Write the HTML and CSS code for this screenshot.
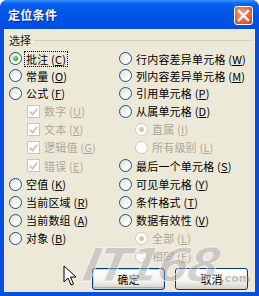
FILE: index.html
```html
<!DOCTYPE html>
<html>
<head>
<meta charset="utf-8">
<link rel="stylesheet" href="styles.css">
</head>
<body>
<div class="window">
  <div class="titlebar">
    <span class="title">定位条件</span>
    <span class="close"><svg width="13" height="13" viewBox="0 0 13 13"><path d="M2 2 L11 11 M11 2 L2 11" stroke="#fff" stroke-width="2.4" stroke-linecap="square"/></svg></span>
  </div>
  <div class="body">
    <div class="group">
      <div class="legend"><span>选择</span><i class="line"></i></div>
      <div class="grid">
        <div class="opt l"><i class="radio on"></i><span class="focus">批注 (<u>C</u>)</span></div>
        <div class="opt r"><i class="radio"></i><span>行内容差异单元格 (<u>W</u>)</span></div>
        <div class="opt l"><i class="radio"></i><span>常量 (<u>O</u>)</span></div>
        <div class="opt r"><i class="radio"></i><span>列内容差异单元格 (<u>M</u>)</span></div>
        <div class="opt l"><i class="radio"></i><span>公式 (<u>F</u>)</span></div>
        <div class="opt r"><i class="radio"></i><span>引用单元格 (<u>P</u>)</span></div>
        <div class="opt l sub dis"><i class="check"></i><span>数字 (<u>U</u>)</span></div>
        <div class="opt r"><i class="radio"></i><span>从属单元格 (<u>D</u>)</span></div>
        <div class="opt l sub dis"><i class="check"></i><span>文本 (<u>X</u>)</span></div>
        <div class="opt r sub dis"><i class="radio on"></i><span>直属 (<u>I</u>)</span></div>
        <div class="opt l sub dis"><i class="check"></i><span>逻辑值 (<u>G</u>)</span></div>
        <div class="opt r sub dis"><i class="radio"></i><span>所有级别 (<u>L</u>)</span></div>
        <div class="opt l sub dis"><i class="check"></i><span>错误 (<u>E</u>)</span></div>
        <div class="opt r"><i class="radio"></i><span>最后一个单元格 (<u>S</u>)</span></div>
        <div class="opt l"><i class="radio"></i><span>空值 (<u>K</u>)</span></div>
        <div class="opt r"><i class="radio"></i><span>可见单元格 (<u>Y</u>)</span></div>
        <div class="opt l"><i class="radio"></i><span>当前区域 (<u>R</u>)</span></div>
        <div class="opt r"><i class="radio"></i><span>条件格式 (<u>T</u>)</span></div>
        <div class="opt l"><i class="radio"></i><span>当前数组 (<u>A</u>)</span></div>
        <div class="opt r"><i class="radio"></i><span>数据有效性 (<u>V</u>)</span></div>
        <div class="opt l"><i class="radio"></i><span>对象 (<u>B</u>)</span></div>
        <div class="opt r sub dis"><i class="radio on"></i><span>全部 (<u>L</u>)</span></div>
        <div class="opt l"></div>
        <div class="opt r sub dis"><i class="radio"></i><span>相同 (<u>E</u>)</span></div>
      </div>
    </div>
    <div class="buttons">
      <button class="btn default">确定</button>
      <button class="btn">取消</button>
    </div>
  </div>
  <div class="watermark"><span class="wm-big">IT168</span><span class="wm-com">.com</span></div>
  <svg class="cursor" width="14" height="22" viewBox="0 0 14 22"><path d="M1 1 L1 17 L5 13 L8 20 L10.5 19 L7.5 12 L13 12 Z" fill="#fff" stroke="#000" stroke-width="1" stroke-linejoin="round"/></svg>
</div>
</body>
</html>
```
FILE: styles.css
```css
html, body { margin: 0; padding: 0; }
body { width: 259px; height: 296px; overflow: hidden; background: #fff; font-family: "Noto Sans CJK SC", "Noto Sans", sans-serif; }
.window {
  position: relative;
  width: 259px; height: 296px; box-sizing: border-box;
  background: #0a4ee0;
  border-radius: 7px 7px 0 0;
  display: flex; flex-direction: column;
  overflow: hidden;
}
.titlebar {
  height: 29px; flex: none;
  background: linear-gradient(#3d95ff 0%, #0a62f0 12%, #0055e8 40%, #0050e6 80%, #0a4bd8 100%);
  display: flex; align-items: center; justify-content: space-between;
  padding: 0 6px 0 8px;
  border-radius: 7px 7px 0 0;
}
.title { color: #fff; font-weight: bold; font-size: 12px; letter-spacing: 0.3px; text-shadow: 1px 1px 0 #0a2a80; }
.close {
  width: 19px; height: 19px; box-sizing: border-box;
  border: 1px solid #fff; border-radius: 3px;
  background: radial-gradient(circle at 40% 35%, #f0a080, #e2603c 60%, #c6421e);
  display: flex; align-items: center; justify-content: center;
  margin-top: 1px;
}
.body {
  flex: 1;
  margin: 0 4px 4px 4px;
  background: #ece9d8;
  display: flex; flex-direction: column;
  font-size: 11px; color: #000;
}
.group { padding: 3px 0 0 0; }
.legend { display: flex; align-items: center; height: 16px; padding-left: 5px; }
.legend span { font-size: 11px; color: #222; }
.line { flex: 1; height: 0; border-top: 1px solid #d0d0bf; margin: 1px 3px 0 3px; }
.grid {
  display: grid;
  grid-template-columns: 110px 1fr;
  grid-template-rows: 17px 17px 18px 18px 18px 18px 19px 18px 18px 18px 18px 18px;
  margin-top: 2px;
}
.opt { display: flex; align-items: center; white-space: nowrap; }
.opt.l { padding-left: 5px; }
.opt.r { padding-left: 5px; }
.opt.l.sub { padding-left: 23px; }
.opt.r.sub { padding-left: 21px; }
.opt span { margin-left: 4px; line-height: 14px; letter-spacing: 0.2px; }
.opt u { text-decoration: underline; }
.dis { color: #aca899; }
.focus { outline: 1px dotted #000; outline-offset: 0; padding: 0 1px; margin-left: 3px !important; }
.radio {
  width: 13px; height: 13px; box-sizing: border-box; flex: none;
  border: 1px solid #1c5180; border-radius: 50%;
  background: linear-gradient(135deg, #dcdad0, #fff 70%);
  position: relative;
}
.radio.on::after {
  content: ""; position: absolute; left: 3px; top: 3px; width: 5px; height: 5px; border-radius: 50%;
  background: radial-gradient(circle at 35% 35%, #9be89b, #21a121 70%);
}
.dis .radio { border-color: #cac8bb; background: #fff; }
.dis .radio.on::after { background: #cac8bb; }
.check {
  width: 13px; height: 13px; box-sizing: border-box; flex: none;
  border: 1px solid #cac8bb; background: #fff; position: relative;
}
.check::after {
  content: ""; position: absolute; left: 3px; top: 1px; width: 3px; height: 6px;
  border: solid #cac8bb; border-width: 0 2px 2px 0; transform: rotate(40deg);
}
.buttons { display: flex; justify-content: flex-end; gap: 10px; padding: 3px 7px 0 0; }
.btn {
  width: 73px; height: 22px; box-sizing: border-box;
  border: 1px solid #003c74; border-radius: 3px;
  background: linear-gradient(#fff, #f4f3ee 60%, #d6d0c5);
  font-family: "Noto Sans CJK SC", sans-serif; font-size: 11px; color: #000;
  padding: 0;
}
.btn.default { box-shadow: inset 0 0 0 1px #c0d2fc, inset 0 -1px 0 1px #97aef4; }
.watermark {
  position: absolute; left: 84px; top: 240px; pointer-events: none;
  display: flex; align-items: flex-end;
}
.wm-big {
  font-family: "DejaVu Sans", sans-serif; font-weight: bold; font-style: italic;
  font-size: 46px; line-height: 50px; letter-spacing: -2px;
  color: rgba(170,170,170,0.5); -webkit-text-stroke: 1px rgba(255,255,255,0.7);
  transform: skewX(-12deg);
}
.wm-com { font-family: "DejaVu Sans", sans-serif; font-weight: bold; font-size: 11px; color: rgba(150,150,150,0.6); margin-left: 2px; margin-bottom: 5px; }
.cursor { position: absolute; left: 63px; top: 265px; }
```
